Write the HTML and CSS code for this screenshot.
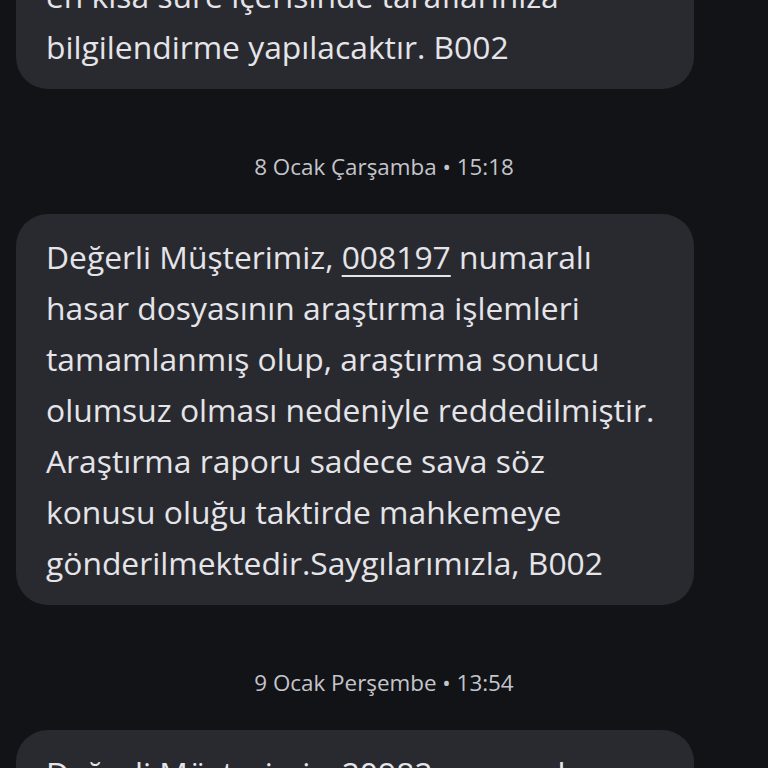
FILE: index.html
```html
<!DOCTYPE html>
<html lang="tr">
<head>
    <meta charset="UTF-8">
    <meta name="viewport" content="width=device-width, initial-scale=1.0">
    <title>Mesajlar</title>
    <link rel="stylesheet" href="styles.css">
</head>
<body>
    <main class="thread">
        <div class="bubble first">
            en kısa süre içerisinde taraflarınıza<br>
            bilgilendirme yapılacaktır. B002
        </div>

        <div class="stamp">8 Ocak Çarşamba • 15:18</div>
        <div class="bubble">
            Değerli Müşterimiz, <span class="ref">008197</span> numaralı<br>
            hasar dosyasının araştırma işlemleri<br>
            tamamlanmış olup, araştırma sonucu<br>
            olumsuz olması nedeniyle reddedilmiştir.<br>
            Araştırma raporu sadece sava söz<br>
            konusu oluğu taktirde mahkemeye<br>
            gönderilmektedir.Saygılarımızla, B002
        </div>

        <div class="stamp">9 Ocak Perşembe • 13:54</div>
        <div class="bubble">
            Değerli Müşterimiz, <span class="ref">20982</span> numaralı<br>
            hasar dosyasının araştırma işlemleri
        </div>
    </main>
</body>
</html>
```

FILE: styles.css
```css
html, body {
    margin: 0;
    padding: 0;
    background-color: #121317;
    overflow: hidden;
}
body {
    font-family: "Open Sans", Roboto, sans-serif;
    color: #e4e4e9;
}
.bubble {
    margin: 0 74px 0 16px;
    background-color: #292a2f;
    border-radius: 32px;
    padding: 17px 30px;
    font-size: 31.8px;
    line-height: 51px;
    white-space: nowrap;
}
.bubble.first {
    margin-top: -47px;
}
.ref {
    text-decoration: underline;
    text-decoration-thickness: 2px;
    text-underline-offset: 6px;
}
.stamp {
    margin: 63px 0 32px;
    text-align: center;
    font-size: 22.4px;
    line-height: 30px;
    color: #c4c5cb;
}
```
